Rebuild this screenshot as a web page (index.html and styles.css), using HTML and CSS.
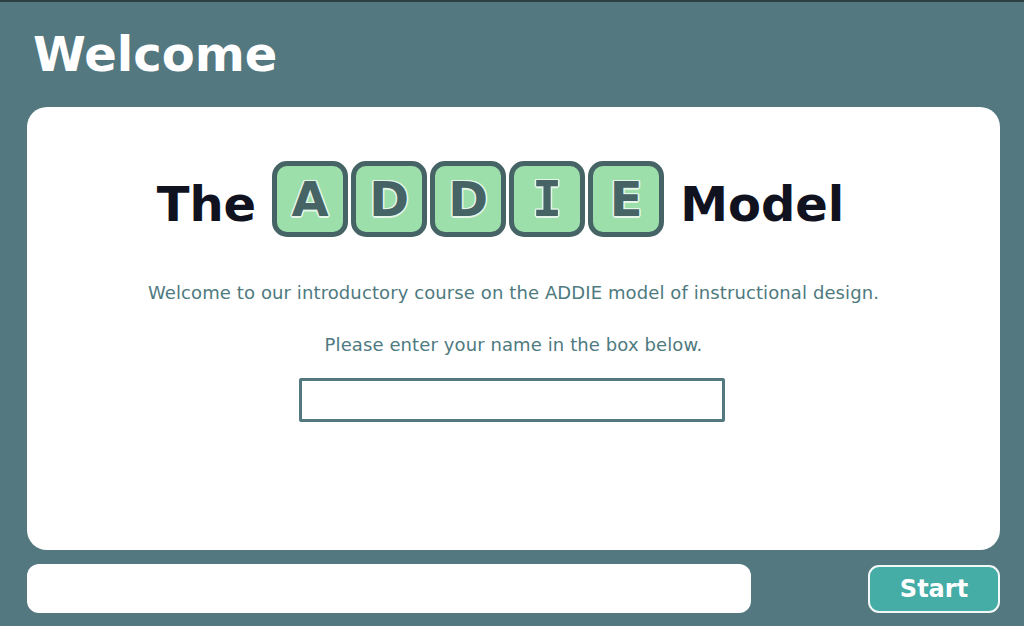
FILE: index.html
```html
<!DOCTYPE html>
<html lang="en">
<head>
    <meta charset="UTF-8">
    <meta name="viewport" content="width=device-width, initial-scale=1.0">
    <title>Welcome - The ADDIE Model</title>
    <link rel="stylesheet" href="styles.css">
</head>
<body>
    <div class="slide">
        <h1 class="page-title">Welcome</h1>

        <main class="card">
            <h2 class="course-title">
                <span class="word">The</span>
                <span class="tiles">
                    <span class="tile">A</span>
                    <span class="tile">D</span>
                    <span class="tile">D</span>
                    <span class="tile tile-serif">I</span>
                    <span class="tile">E</span>
                </span>
                <span class="word">Model</span>
            </h2>

            <p class="intro">Welcome to our introductory course on the ADDIE model of instructional design.</p>
            <p class="intro">Please enter your name in the box below.</p>

            <input type="text" class="name-input" id="learnerName" aria-label="Your name">
        </main>

        <footer class="footer">
            <div class="status-bar"></div>
            <button class="start-button" type="button">Start</button>
        </footer>
    </div>
</body>
</html>
```

FILE: styles.css
```css
:root {
    --teal-bg: #537880;
    --teal-dark: #466466;
    --tile-green: #9ddfab;
    --ink: #10131f;
    --text-teal: #4e7a80;
    --button-teal: #46aca6;
}

* {
    margin: 0;
    padding: 0;
    box-sizing: border-box;
}

html, body {
    height: 100%;
}

body {
    font-family: 'DejaVu Sans', Verdana, sans-serif;
    background: var(--teal-bg);
    border-top: 2px solid #2d3f43;
    overflow: hidden;
}

.slide {
    padding: 0 24px 0 27px;
    display: flex;
    flex-direction: column;
}

.page-title {
    color: #fff;
    font-size: 48px;
    font-weight: bold;
    line-height: 1;
    margin: 28px 0 0 6px;
    height: 77px;
}

.card {
    background: #fff;
    border-radius: 20px;
    height: 443px;
    display: flex;
    flex-direction: column;
    align-items: center;
    padding-top: 54px;
}

/* Title row */
.course-title {
    display: flex;
    align-items: center;
    gap: 16px;
    font-size: 48px;
    font-weight: bold;
    color: var(--ink);
    line-height: 1;
    margin-right: 26px;
}

.word {
    position: relative;
    top: 5px;
}

.tiles {
    display: flex;
    gap: 3px;
}

.tile {
    width: 76px;
    height: 76px;
    border: 5px solid var(--teal-dark);
    border-radius: 15px;
    background: var(--tile-green);
    display: flex;
    align-items: center;
    justify-content: center;
    font-size: 48px;
    font-weight: bold;
    color: var(--teal-dark);
    text-shadow:
        1.5px 0 0 #e4f6e8, -1.5px 0 0 #e4f6e8,
        0 1.5px 0 #e4f6e8, 0 -1.5px 0 #e4f6e8,
        1px 1px 0 #e4f6e8, -1px -1px 0 #e4f6e8,
        1px -1px 0 #e4f6e8, -1px 1px 0 #e4f6e8;
}

.tile-serif {
    font-family: 'DejaVu Sans Mono', monospace;
    font-size: 50px;
}

.intro {
    color: var(--text-teal);
    font-size: 18px;
    letter-spacing: 0.1px;
    line-height: 22px;
    margin-top: 45px;
}

.intro + .intro {
    margin-top: 30px;
}

.name-input {
    margin-top: 22px;
    margin-right: 3px;
    width: 426px;
    height: 44px;
    border: 3px solid var(--teal-bg);
    border-radius: 2px;
    background: #fff;
    outline: none;
    font-family: inherit;
    font-size: 16px;
    padding: 0 8px;
}

/* Bottom bar */
.footer {
    display: flex;
    justify-content: space-between;
    align-items: center;
    margin-top: 14px;
}

.status-bar {
    width: 724px;
    height: 49px;
    background: #fff;
    border-radius: 12px;
}

.start-button {
    width: 132px;
    height: 48px;
    background: var(--button-teal);
    border: 2px solid #f2f7f7;
    border-radius: 11px;
    color: #fff;
    font-family: inherit;
    font-size: 24px;
    font-weight: bold;
    cursor: pointer;
}
```
